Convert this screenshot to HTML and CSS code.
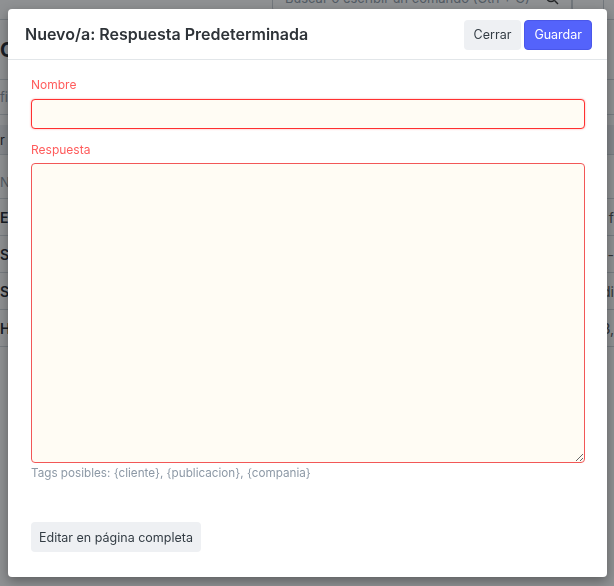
FILE: index.html
```html
<!DOCTYPE html>
<html lang="es">
<head>
    <meta charset="UTF-8">
    <meta name="viewport" content="width=device-width, initial-scale=1.0">
    <title>Nuevo/a: Respuesta Predeterminada</title>
    <link rel="stylesheet" href="styles.css">
</head>
<body>
    <div class="page">
        <div class="navbar">
            <div class="search">
                <span>Buscar o escribir un comando (Ctrl + G)</span>
                <svg width="14" height="14" viewBox="0 0 14 14" fill="none" stroke="#333" stroke-width="1.4"><circle cx="6" cy="6" r="4.5"/><path d="M9.5 9.5L13 13"/></svg>
            </div>
            <div class="nav-box"></div>
        </div>
        <div class="page-title">Correos Predeterminados</div>
        <div class="filter-row"><span class="muted">filtro</span></div>
        <div class="filter-row shaded"><span>r filtro</span></div>
        <div class="list-head"><span class="muted">Nombre</span></div>
        <div class="list-row"><span>Envio</span><span class="right">a f</span></div>
        <div class="list-row"><span>Stock</span><span class="right">-</span></div>
        <div class="list-row"><span>Stock</span><span class="right">di</span></div>
        <div class="list-row"><span>Hola</span><span class="right">3,</span></div>
    </div>

    <div class="backdrop"></div>

    <div class="modal">
        <div class="modal-header">
            <h4 class="modal-title">Nuevo/a: Respuesta Predeterminada</h4>
            <div class="modal-actions">
                <button class="btn btn-default">Cerrar</button>
                <button class="btn btn-primary">Guardar</button>
            </div>
        </div>
        <div class="modal-body">
            <label class="control-label" for="nombre">Nombre</label>
            <input type="text" id="nombre" class="input-error focused">

            <label class="control-label second" for="respuesta">Respuesta</label>
            <textarea id="respuesta" class="input-error"></textarea>
            <p class="help-box">Tags posibles: {cliente}, {publicacion}, {compania}</p>

            <button class="btn btn-default full-page">Editar en página completa</button>
        </div>
    </div>
</body>
</html>
```

FILE: styles.css
```css
body {
    margin: 0;
    font-family: Inter, "Noto Sans", sans-serif;
    background-color: #fff;
    color: #1f272e;
    overflow: hidden;
}
.page {
    width: 614px;
    height: 586px;
}
.navbar {
    height: 36px;
    margin-top: -16px;
    border-bottom: 1px solid #d1d8dd;
    display: flex;
    justify-content: flex-end;
    padding-right: 10px;
    box-sizing: border-box;
}
.search {
    width: 300px;
    height: 28px;
    border: 1px solid #c8ced3;
    border-radius: 4px;
    display: flex;
    align-items: center;
    justify-content: space-between;
    padding: 0 12px 0 12px;
    box-sizing: border-box;
    font-size: 13px;
    white-space: nowrap;
    color: #8d99a6;
}
.nav-box {
    width: 30px;
    height: 28px;
    border: 1px solid #c8ced3;
}
.page-title {
    margin-top: 18px;
    font-size: 20px;
    font-weight: 700;
    height: 24px;
    padding-bottom: 17px;
    border-bottom: 1px solid #d1d8dd;
}
.filter-row {
    height: 34px;
    display: flex;
    align-items: center;
    font-size: 13px;
    border-bottom: 1px solid #d1d8dd;
}
.filter-row.shaded {
    background-color: #eceff1;
    height: 29px;
    margin-top: 10px;
}
.list-head {
    height: 32px;
    padding-top: 11px;
    display: flex;
    align-items: center;
    font-size: 13px;
    border-bottom: 1px solid #d1d8dd;
}
.list-row {
    height: 36px;
    display: flex;
    align-items: center;
    justify-content: space-between;
    font-size: 14px;
    font-weight: 600;
    border-bottom: 1px solid #d1d8dd;
}
.list-row .right {
    font-weight: 400;
    color: #555;
}
.muted {
    color: #8d99a6;
}
.backdrop {
    position: fixed;
    inset: 0;
    background-color: rgba(16, 22, 26, 0.47);
}
.modal {
    position: absolute;
    left: 8px;
    top: 9px;
    width: 599px;
    height: 568px;
    background-color: #fff;
    border-radius: 4px;
    box-shadow: 0 4px 12px rgba(0, 0, 0, 0.35);
    display: flex;
    flex-direction: column;
}
.modal-header {
    height: 50px;
    border-bottom: 1px solid #e2e6e9;
    display: flex;
    align-items: center;
    justify-content: space-between;
    padding: 0 15px 0 17px;
}
.modal-title {
    margin: 0;
    font-size: 16px;
    font-weight: 600;
    color: #2e3338;
}
.modal-actions {
    display: flex;
    gap: 3px;
    margin-top: 1px;
}
.btn {
    font-family: Inter, "Noto Sans", sans-serif;
    font-size: 12.5px;
    height: 30px;
    padding: 0 9px;
    border-radius: 4px;
    border: 1px solid transparent;
    cursor: pointer;
}
.btn-default {
    background-color: #eef0f3;
    color: #333c44;
}
.btn-primary {
    background-color: #5463fb;
    border-color: #4a57ea;
    color: #fff;
}
.modal-body {
    display: flex;
    flex-direction: column;
    align-items: flex-start;
    padding: 16px 22px 25px 23px;
}
.control-label {
    font-size: 12px;
    line-height: 18px;
    color: #ff5c5c;
    margin-bottom: 5px;
}
.control-label.second {
    margin-top: 12px;
    margin-bottom: 4px;
}
input, textarea {
    width: 100%;
    box-sizing: border-box;
    background-color: #fffcf4;
    border: 1px solid #f25757;
    border-radius: 4px;
    font-family: Inter, "Noto Sans", sans-serif;
    font-size: 13px;
    margin: 0;
}
input {
    height: 30px;
}
input.focused {
    border-color: #ff3030;
    box-shadow: 0 0 2px rgba(255, 40, 40, 0.45);
    outline: none;
}
textarea {
    height: 300px;
    resize: vertical;
}
.help-box {
    margin: 2px 0 0;
    font-size: 11.7px;
    line-height: 16px;
    color: #8d99a6;
}
.full-page {
    margin-top: 41px;
    padding: 0 7px;
}
```
